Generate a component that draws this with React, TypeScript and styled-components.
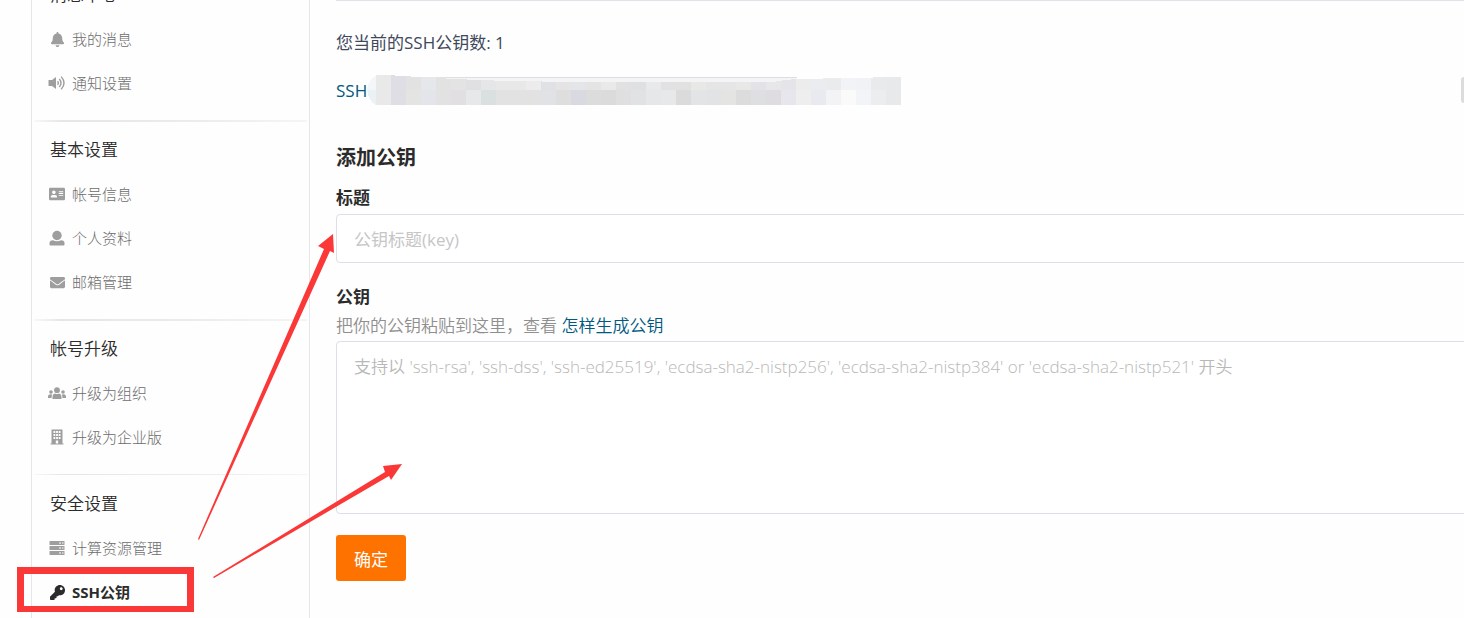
import React from 'react';
import styled, { createGlobalStyle } from 'styled-components';
import { FaBell, FaAddressCard, FaEnvelope, FaKey } from 'react-icons/fa';

const RED = '#fb3838';

const GlobalStyle = createGlobalStyle`
  * { box-sizing: border-box; }
  body {
    margin: 0;
    background: #fefefe;
    color: #2b2b2b;
    font-family: "Open Sans", "Noto Sans CJK SC", sans-serif;
    font-size: 17px;
    font-weight: 400;
    overflow: hidden;
  }
  a { text-decoration: none; }
`;

const Page = styled.div`
  position: relative;
  display: flex;
  min-height: 100vh;
  overflow: hidden;
`;

const Sidebar = styled.nav`
  flex: 0 0 279px;
  margin-left: 31px;
  border-left: 1px solid #e6e6e6;
  border-right: 1px solid #e6e6e6;
  padding: 0 2px;
  height: 100vh;
  overflow: hidden;
`;

const Menu = styled.div`
  margin-top: -27px;
`;

const Group = styled.section`
  padding-bottom: 15px;
`;

const Divider = styled.div<{ $thin?: boolean }>`
  height: ${(p) => (p.$thin ? 1 : 2)}px;
  margin-bottom: ${(p) => (p.$thin ? 7 : 6)}px;
  background: linear-gradient(to right, #f8f8f8, #e6e6e6 10%, #ececec 60%, #f5f5f5);
`;

const GroupTitle = styled.h2`
  margin: 0;
  padding-left: 16px;
  font-size: 17px;
  line-height: 44px;
  font-weight: 350;
`;

const Item = styled.a<{ $active?: boolean }>`
  display: flex;
  align-items: center;
  gap: 6px;
  height: 44px;
  padding-left: 14px;
  font-size: 15px;
  line-height: 20px;
  font-weight: ${(p) => (p.$active ? 700 : 300)};
  color: ${(p) => (p.$active ? '#2b2b2b' : '#6c6c6c')};
`;

const IconBox = styled.span<{ $active?: boolean }>`
  display: flex;
  justify-content: center;
  width: 18px;
  color: ${(p) => (p.$active ? '#2b2b2b' : '#9e9e9e')};
`;

const Main = styled.main`
  flex: 1;
  min-width: 0;
  padding-left: 26px;
  margin-right: -20px;
`;

const Rule = styled.hr`
  margin: 0;
  border: 0;
  height: 1px;
  background: #dfe3e8;
`;

const Count = styled.p`
  margin: 30px 0 20px;
  line-height: 24px;
  color: #40485b;
`;

const KeyRow = styled.div`
  display: flex;
  align-items: center;
  height: 30px;
`;

const Link = styled.a`
  color: #005980;
`;

const GreyButton = styled.button`
  margin-left: auto;
  flex: 0 0 23px;
  height: 26px;
  padding: 0;
  border: 0;
  border-radius: 3px;
  background: #dcdcdc;
`;

const FormTitle = styled.h3`
  margin: 39px 0 14px;
  font-size: 20px;
  line-height: 28px;
  font-weight: 700;
`;

const Label = styled.label`
  display: block;
  line-height: 24px;
  font-weight: 700;
  margin-bottom: 4px;
`;

const fieldBorder = '1px solid #dcdfe8';

const TitleInput = styled.input`
  display: block;
  width: 100%;
  height: 49px;
  margin-bottom: 22px;
  padding: 2px 17px 0;
  border: ${fieldBorder};
  border-radius: 4px;
  background: #fff;
  font: inherit;
  &::placeholder { color: #c6c6c6; opacity: 1; }
`;

const Hint = styled.p`
  margin: 5px 0 3px;
  line-height: 24px;
  font-weight: 350;
  color: #8f8f8f;
`;

const KeyInput = styled.textarea`
  display: block;
  width: 100%;
  height: 173px;
  margin-bottom: 21px;
  padding: 13px 17px;
  border: ${fieldBorder};
  border-radius: 4px;
  background: #fff;
  font: inherit;
  font-weight: 350;
  line-height: 24px;
  resize: none;
  &::placeholder { color: #b8b8b8; opacity: 1; }
`;

const Submit = styled.button`
  width: 70px;
  height: 46px;
  padding: 0;
  border: 0;
  border-radius: 3px;
  background: #fe7300;
  color: #fff;
  font: inherit;
`;

const Frame = styled.div`
  position: absolute;
  left: 17px;
  top: 567px;
  width: 177px;
  height: 45px;
  border: 7px solid ${RED};
  border-bottom-width: 6px;
  pointer-events: none;
`;

const Arrows = styled.svg`
  position: absolute;
  left: 0;
  top: 0;
  pointer-events: none;
`;

const Speaker = () => (
  <svg width="18" height="16" viewBox="0 0 18 16" fill="none" stroke="currentColor">
    <path d="M0.500 5h3.500L8 2v12l-4-3h-3.500z" fill="currentColor" stroke="none" />
    <path d="M9.500 6.200q1.600 1.800 0 3.600M11.300 4q3.400 4 0 8M13.200 1.600q5.600 6.400 0 12.800" strokeWidth="1.400" />
  </svg>
);

const Person = () => (
  <svg width="16" height="16" viewBox="0 0 16 16" fill="currentColor">
    <circle cx="8" cy="5.500" r="4.700" />
    <path d="M.5 14.500V13Q.5 10.600 4 10.300Q8 12.300 12 10.300Q15.500 10.600 15.500 13V14.500Q15.500 15.500 14.500 15.500H1.500Q.5 15.500 .5 14.500z" />
  </svg>
);

const People = () => (
  <svg width="18" height="12" viewBox="0 0 18 12" fill="currentColor">
    <circle cx="9" cy="3.200" r="2.900" />
    <path d="M4.500 12V9.500Q4.500 7 7 6.600Q9 7.600 11 6.600Q13.500 7 13.500 9.500V12z" />
    <circle cx="3" cy="5" r="1.800" />
    <circle cx="15" cy="5" r="1.800" />
    <path d="M0 11V9.500Q0 7.500 2 7.300L4.200 7.500Q3.500 8.500 3.600 11zM18 11V9.500Q18 7.500 16 7.300L13.800 7.500Q14.500 8.500 14.400 11z" />
  </svg>
);

const Building = () => (
  <svg width="14" height="16" viewBox="0 0 14 16">
    <path d="M1.500 0.500h11V14.500H13.500V15.500H.5V14.500H1.500z" fill="currentColor" />
    <path
      d="M3.500 3h1.800M6.100 3h1.800M8.700 3h1.800M3.500 6h1.800M6.100 6h1.800M8.700 6h1.800M3.500 9h1.800M6.100 9h1.800M8.700 9h1.800"
      stroke="#fefefe"
      strokeWidth="1.800"
    />
    <path d="M5.800 11.500h2.400v3H5.800z" fill="#fefefe" />
  </svg>
);

const Servers = () => (
  <svg width="16" height="14" viewBox="0 0 16 14">
    {[0, 5, 10].map((y) => (
      <g key={y}>
        <rect x="0.500" y={y} width="15" height="4" rx="0.500" fill="currentColor" />
        <path d={`M10 ${y + 2}h2M13 ${y + 2}h1.500`} stroke="#fefefe" strokeWidth="1.200" />
      </g>
    ))}
  </svg>
);

const topCells = ['#e9e9ea', '#dfdee4', '#e2e2e2', '#e6e7ea', '#e2e2e3', '#e4e3e4', '#e0e0e2', '#e4e6e8', '#e8e8e9', '#e8e8e9', '#ececec', '#e0e1e5', '#e4e4e4', '#e4e5e9', '#e4e4e4', '#e9e9ea', '#e1e1e1', '#dfe0e0', '#e8e9ea', '#e1e1e1', '#e1e1e1', '#e8e8e7', '#e5e5e6', '#e5e5e6', '#e8e8e7', '#e2e3e6', '#e7e7e9', '#e4e4e9', '#ececec', '#ebecf0', '#eaebed', '#f2f3f6', '#f1f2f5', '#e9eaec', '#e8e9ea'];
const bottomCells = ['#e9e9ea', '#dfdee4', '#e4e4e3', '#e4e5ea', '#e2e2e2', '#e1dfe2', '#e7e8ea', '#dadfe0', '#e2e2e3', '#e2e2e2', '#e2e2e2', '#e1e2e5', '#dedede', '#d9dae1', '#dcdcdc', '#dbdbdb', '#dfdfe0', '#e1e2e3', '#e5e7e8', '#e7e8ea', '#dbdbdb', '#e2e4e6', '#e2e3e4', '#e4e4e3', '#dcdcdd', '#dedfe0', '#dedce0', '#e8e6ed', '#eeeeee', '#e9eaf0', '#f3f3f5', '#fafafa', '#f3f4f7', '#ecedee', '#e8e9ea'];

const Mosaic = () => (
  <svg width="534" height="30" viewBox="366 75 534 30" shapeRendering="crispEdges">
    <clipPath id="mosaic-edge">
      <path d="M375 75H394V76H410V77H445V79H466V80H493V81H541V82H775V81H781V80H790V79H822V78H872V77H900V105H375z" />
    </clipPath>
    <path d="M375 76Q367 79 366 90H375z" fill="#f4f7f9" />
    <path d="M366 90Q368 102 375 105V90z" fill="#eaf2f6" />
    <path d="M445 78H795V82H445z" fill="#f4f4f6" />
    <path d="M437 77H796V78H437z" fill="#dddee2" />
    <g clipPath="url(#mosaic-edge)">
      {topCells.map((c, i) => <rect key={i} x={375 + i * 15} y="75" width="15" height="15" fill={c} />)}
      {bottomCells.map((c, i) => <rect key={i} x={375 + i * 15} y="90" width="15" height="15" fill={c} />)}
    </g>
  </svg>
);

type Entry = { text: string; icon: React.ReactNode; active?: boolean };
type Section = { title: string; items: Entry[]; thin?: boolean };

const sections: Section[] = [
  {
    title: '消息中心',
    items: [
      { text: '我的消息', icon: <FaBell size={15} /> },
      { text: '通知设置', icon: <Speaker /> },
    ],
  },
  {
    title: '基本设置',
    items: [
      { text: '帐号信息', icon: <FaAddressCard size={16} /> },
      { text: '个人资料', icon: <Person /> },
      { text: '邮箱管理', icon: <FaEnvelope size={15} /> },
    ],
  },
  {
    title: '帐号升级',
    items: [
      { text: '升级为组织', icon: <People /> },
      { text: '升级为企业版', icon: <Building /> },
    ],
  },
  {
    title: '安全设置',
    thin: true,
    items: [
      { text: '计算资源管理', icon: <Servers /> },
      { text: 'SSH公钥', icon: <FaKey size={15} />, active: true },
    ],
  },
];

export default function App() {
  return (
    <Page>
      <GlobalStyle />
      <Sidebar>
        <Menu>
          {sections.map((s, i) => (
            <React.Fragment key={s.title}>
              {i > 0 && <Divider $thin={s.thin} />}
              <Group>
                <GroupTitle>{s.title}</GroupTitle>
                {s.items.map((it) => (
                  <Item key={it.text} href="#" $active={it.active}>
                    <IconBox $active={it.active}>{it.icon}</IconBox>
                    {it.text}
                  </Item>
                ))}
              </Group>
            </React.Fragment>
          ))}
        </Menu>
      </Sidebar>
      <Main>
        <Rule />
        <Count>您当前的SSH公钥数: 1</Count>
        <KeyRow>
          <Link href="#">SSH</Link>
          <Mosaic />
          <GreyButton type="button" aria-label="删除" />
        </KeyRow>
        <form>
          <FormTitle>添加公钥</FormTitle>
          <Label htmlFor="key-title">标题</Label>
          <TitleInput id="key-title" placeholder="公钥标题(key)" />
          <Label htmlFor="key-body">公钥</Label>
          <Hint>
            把你的公钥粘贴到这里，查看 <Link href="#">怎样生成公钥</Link>
          </Hint>
          <KeyInput
            id="key-body"
            placeholder="支持以 'ssh-rsa', 'ssh-dss', 'ssh-ed25519', 'ecdsa-sha2-nistp256', 'ecdsa-sha2-nistp384' or 'ecdsa-sha2-nistp521' 开头"
          />
          <Submit type="button">确定</Submit>
        </form>
      </Main>
      <Frame />
      <Arrows width="420" height="618" viewBox="0 0 420 618" fill={RED}>
        <path d="M198 539L324 249L318 246L333 234L334 253L330 251L199 540z" />
        <path d="M213 577L385 472L383 466L402 464L391 480L389 476L214 578z" />
      </Arrows>
    </Page>
  );
}
